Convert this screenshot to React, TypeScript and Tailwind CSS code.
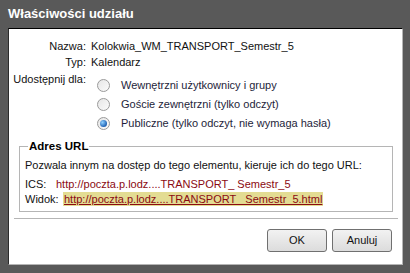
import React from 'react';

const font = { fontFamily: '"Liberation Sans", Arial, sans-serif' };

const Radio = ({ checked, label }: { checked?: boolean; label: string }) => (
  <div className="flex items-center h-[19px]">
    <span className="flex items-center justify-center w-[13px] h-[13px] rounded-full border border-[#9a9a9a] bg-gradient-to-br from-[#e6e6e6] to-[#fbfbfb]">
      {checked && (
        <span className="w-[7px] h-[7px] rounded-full bg-[radial-gradient(circle_at_35%_35%,#8fd0ff,#1f63b5_70%,#0e3f86)]" />
      )}
    </span>
    <span className="ml-[11px] text-[#1e1e3a]">{label}</span>
  </div>
);

const Button = ({ children }: { children: React.ReactNode }) => (
  <button className="w-[60px] h-[23px] rounded-[3px] border border-[#707070] bg-gradient-to-b from-[#f2f2f2] to-[#dcdcdc] text-[#111] text-[11px]">
    {children}
  </button>
);

export default function App() {
  return (
    <div
      className="w-[410px] h-[273px] bg-[#595959] flex flex-col text-[11px] text-[#111]"
      style={font}
    >
      <div className="h-[28px] pl-[8px] pt-[6px] text-white font-bold text-[13px] leading-[16px]">
        Właściwości udziału
      </div>
      <div className="ml-[8px] w-[395px] h-[237px] bg-white border-t border-l border-t-black border-l-[#2b2b2b] border-r border-b border-r-[#b5b5b5] border-b-[#b5b5b5] flex flex-col">
        <div className="flex mt-[10px] h-[15px] items-center">
          <span className="w-[77px] text-right">Nazwa:</span>
          <span className="ml-[5px]">Kolokwia_WM_TRANSPORT_Semestr_5</span>
        </div>
        <div className="flex mt-[1px] h-[15px] items-center">
          <span className="w-[77px] text-right">Typ:</span>
          <span className="ml-[5px]">Kalendarz</span>
        </div>
        <div className="flex mt-[2px]">
          <span className="w-[77px] text-right h-[15px] leading-[15px]">Udostępnij dla:</span>
          <div className="ml-[11px] mt-[4px] flex flex-col">
            <Radio label="Wewnętrzni użytkownicy i grupy" />
            <Radio label="Goście zewnętrzni (tylko odczyt)" />
            <Radio checked label="Publiczne (tylko odczyt, nie wymaga hasła)" />
          </div>
        </div>
        <fieldset className="ml-[10px] mt-[6px] w-[374px] h-[73px] border border-[#b5b5b5] px-[5px] pb-[3px]">
          <legend className="ml-[3px] px-[1px] font-bold text-[11.5px] text-black leading-[14px]">
            Adres URL
          </legend>
          <div className="mt-[5px] h-[15px] leading-[15px]">
            Pozwala innym na dostęp do tego elementu, kieruje ich do tego URL:
          </div>
          <div className="flex mt-[4px] h-[15px] leading-[15px]">
            <span className="w-[31px]">ICS:</span>
            <span className="text-[#8b0a12]">http://poczta.p.lodz....TRANSPORT_ Semestr_5</span>
          </div>
          <div className="flex h-[14px] leading-[14px]">
            <span className="w-[38px]">Widok:</span>
            <span className="bg-[#e3dc93] text-[#8b0a12] underline px-[1px]">
              http://poczta.p.lodz....TRANSPORT_ Semestr_5.html
            </span>
          </div>
        </fieldset>
        <div className="ml-[5px] mr-[4px] mt-[6px] border-t border-[#b5b5b5]" />
        <div className="flex justify-end gap-[5px] mr-[10px] mt-[10px]">
          <Button>OK</Button>
          <Button>Anuluj</Button>
        </div>
      </div>
    </div>
  );
}
